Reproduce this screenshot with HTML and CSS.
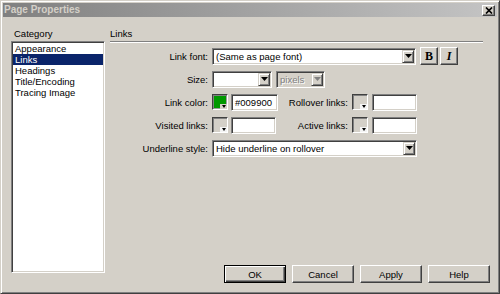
FILE: index.html
```html
<!DOCTYPE html>
<html>
<head>
<meta charset="utf-8">
<title>Page Properties</title>
<link rel="stylesheet" href="styles.css">
</head>
<body>
<div class="window">
  <div class="titlebar">
    <span class="title">Page Properties</span>
    <span class="close"><svg width="8" height="7" viewBox="0 0 8 7"><path d="M1 0.5L7 6.5M7 0.5L1 6.5" stroke="#000" stroke-width="1.7" fill="none"/></svg></span>
  </div>
  <div class="main">
    <div class="category">
      <div class="cap cap-left">Category</div>
      <ul class="listbox">
        <li>Appearance</li>
        <li class="sel">Links</li>
        <li>Headings</li>
        <li>Title/Encoding</li>
        <li>Tracing Image</li>
      </ul>
    </div>
    <div class="panel">
      <div class="cap">Links</div>
      <div class="rule"></div>
      <div class="form">
        <div class="row">
          <span class="lbl">Link font:</span>
          <div class="select w-font"><span class="val">(Same as page font)</span><span class="arrow"><svg width="7" height="4" viewBox="0 0 7 4"><path d="M0 0H7L3.5 4Z" fill="#000"/></svg></span></div>
          <div class="styles"><span class="fbtn bold">B</span><span class="fbtn ital">I</span></div>
        </div>
        <div class="row">
          <span class="lbl">Size:</span>
          <div class="select w-size"><span class="val"></span><span class="arrow"><svg width="7" height="4" viewBox="0 0 7 4"><path d="M0 0H7L3.5 4Z" fill="#000"/></svg></span></div>
          <div class="select disabled w-unit"><span class="val">pixels</span><span class="arrow"><svg width="7" height="4" viewBox="0 0 7 4"><path d="M0 0H7L3.5 4Z" fill="#808080"/></svg></span></div>
        </div>
        <div class="row">
          <span class="lbl">Link color:</span>
          <div class="pair pair-a"><span class="swatch green"></span><span class="input w-47">#009900</span></div>
          <span class="lbl lbl2">Rollover links:</span>
          <div class="pair pair-b"><span class="swatch"></span><span class="input w-45"></span></div>
        </div>
        <div class="row">
          <span class="lbl">Visited links:</span>
          <div class="pair pair-a"><span class="swatch"></span><span class="input w-45"></span></div>
          <span class="lbl lbl2">Active links:</span>
          <div class="pair pair-b"><span class="swatch"></span><span class="input w-45"></span></div>
        </div>
        <div class="row">
          <span class="lbl">Underline style:</span>
          <div class="select w-under"><span class="val">Hide underline on rollover</span><span class="arrow"><svg width="7" height="4" viewBox="0 0 7 4"><path d="M0 0H7L3.5 4Z" fill="#000"/></svg></span></div>
        </div>
      </div>
      <div class="buttons">
        <span class="btn default">OK</span>
        <span class="btn">Cancel</span>
        <span class="btn">Apply</span>
        <span class="btn">Help</span>
      </div>
    </div>
  </div>
</div>
</body>
</html>
```

FILE: styles.css
```css
* { box-sizing: border-box; }
html, body { margin: 0; padding: 0; }
body {
  width: 500px;
  height: 294px;
  overflow: hidden;
  background: #d4d0c8;
  font-family: "Liberation Sans", Arial, sans-serif;
  font-size: 9.5px;
  color: #000;
}
.window {
  width: 500px;
  height: 294px;
  display: flex;
  flex-direction: column;
  background: #d4d0c8;
  border: 1px solid;
  border-color: #d4d0c8 #404040 #404040 #d4d0c8;
  box-shadow: inset 1px 1px #fff, inset -1px -1px #808080;
  padding: 2px;
}
.titlebar {
  height: 14px;
  flex: none;
  display: flex;
  align-items: center;
  justify-content: space-between;
  background: linear-gradient(to right, #808080, #c4c4c4);
  padding: 0 1px 0 1px;
}
.title {
  color: #d4d0c8;
  font-weight: bold;
  font-size: 10px;
  line-height: 14px;
}
.close {
  width: 13px;
  height: 11px;
  display: flex;
  align-items: center;
  justify-content: center;
  background: #d4d0c8;
  border: 1px solid;
  border-color: #fff #404040 #404040 #fff;
  box-shadow: inset -1px -1px #808080;
  margin-right: 1px;
}
.main {
  flex: 1;
  display: grid;
  grid-template-columns: 94px 1fr;
  column-gap: 5px;
  padding: 10px 7px 8px 8px;
  min-height: 0;
}
.cap {
  height: 14px;
  line-height: 13px;
}
.cap-left { padding-left: 3px; }
.listbox {
  margin: 0;
  list-style: none;
  height: 232px;
  background: #fff;
  border: 1px solid;
  border-color: #808080 #fff #fff #808080;
  box-shadow: inset 1px 1px #404040, inset -1px -1px #d4d0c8;
  padding: 1px;
}
.listbox li {
  line-height: 11px;
  height: 11px;
  padding-left: 2px;
}
.listbox li.sel {
  background: #0a246a;
  color: #fff;
}
.panel {
  display: flex;
  flex-direction: column;
  min-height: 0;
}
.rule {
  height: 2px;
  border-top: 1px solid #808080;
  border-bottom: 1px solid #fff;
  margin-right: 7px;
}
.form {
  display: flex;
  flex-direction: column;
  gap: 5px;
  margin-top: 4px;
}
.row {
  display: flex;
  align-items: center;
  height: 18px;
  gap: 4px;
}
.lbl {
  width: 98px;
  text-align: right;
  white-space: nowrap;
}
.lbl2 { width: 66px; }
.select {
  height: 17px;
  display: flex;
  align-items: stretch;
  background: #fff;
  border: 1px solid;
  border-color: #808080 #fff #fff #808080;
  box-shadow: inset 1px 1px #404040, inset -1px -1px #d4d0c8;
  padding: 1px;
}
.select .val {
  flex: 1;
  padding-left: 2px;
  line-height: 13px;
  white-space: nowrap;
  overflow: hidden;
}
.select .arrow {
  width: 12px;
  display: flex;
  align-items: center;
  justify-content: center;
  background: #d4d0c8;
  border: 1px solid;
  border-color: #d4d0c8 #404040 #404040 #d4d0c8;
  box-shadow: inset 1px 1px #fff, inset -1px -1px #808080;
}
.select.disabled { background: #d4d0c8; }
.select.disabled .val { color: #808080; text-shadow: 1px 1px 0 #fff; }
.w-font { width: 204px; }
.w-size { width: 60px; }
.w-unit { width: 49px; }
.w-under { width: 205px; }
.styles {
  display: flex;
  gap: 2px;
}
.fbtn {
  width: 18px;
  height: 18px;
  display: flex;
  align-items: center;
  justify-content: center;
  font-family: "Liberation Serif", "Times New Roman", serif;
  font-weight: bold;
  font-size: 12px;
  background: #d4d0c8;
  border: 1px solid;
  border-color: #fff #404040 #404040 #fff;
  box-shadow: inset -1px -1px #808080;
}
.fbtn.ital { font-style: italic; }
.pair {
  display: flex;
  align-items: center;
}
.pair-a { gap: 3px; width: 66px; }
.pair-b { gap: 4px; }
.swatch {
  position: relative;
  width: 16px;
  height: 16px;
  background: #d4d0c8;
  border: 1px solid;
  border-color: #404040 #fff #fff #404040;
  box-shadow: inset 1px 1px #808080, inset -1px -1px #d4d0c8;
}
.swatch.green {
  background: #009900;
  box-shadow: inset 1px 1px #808080, inset -1px -1px #9c9c9c;
}
.swatch::after {
  content: "";
  position: absolute;
  right: 0;
  bottom: 0;
  width: 7px;
  height: 5px;
  background: #f4f4f4;
}
.swatch::before {
  content: "";
  position: absolute;
  right: 1px;
  bottom: 1px;
  width: 0;
  height: 0;
  border-left: 2.5px solid transparent;
  border-right: 2.5px solid transparent;
  border-top: 3px solid #000;
  z-index: 1;
}
.swatch.green::after { background: #d4d0c8; }
.input {
  height: 17px;
  background: #fff;
  border: 1px solid;
  border-color: #808080 #fff #fff #808080;
  box-shadow: inset 1px 1px #404040, inset -1px -1px #d4d0c8;
  padding-left: 3px;
  line-height: 15px;
}
.w-47 { width: 47px; }
.w-45 { width: 45px; }
.buttons {
  margin-top: auto;
  display: flex;
  justify-content: flex-end;
  gap: 6px;
}
.btn {
  width: 62px;
  height: 18px;
  display: flex;
  align-items: center;
  justify-content: center;
  background: #d4d0c8;
  border: 1px solid;
  border-color: #fff #404040 #404040 #fff;
  box-shadow: inset -1px -1px #808080;
}
.btn.default {
  border-color: #000;
  box-shadow: inset 1px 1px #fff, inset -1px -1px #404040, inset -2px -2px #808080;
}
```
